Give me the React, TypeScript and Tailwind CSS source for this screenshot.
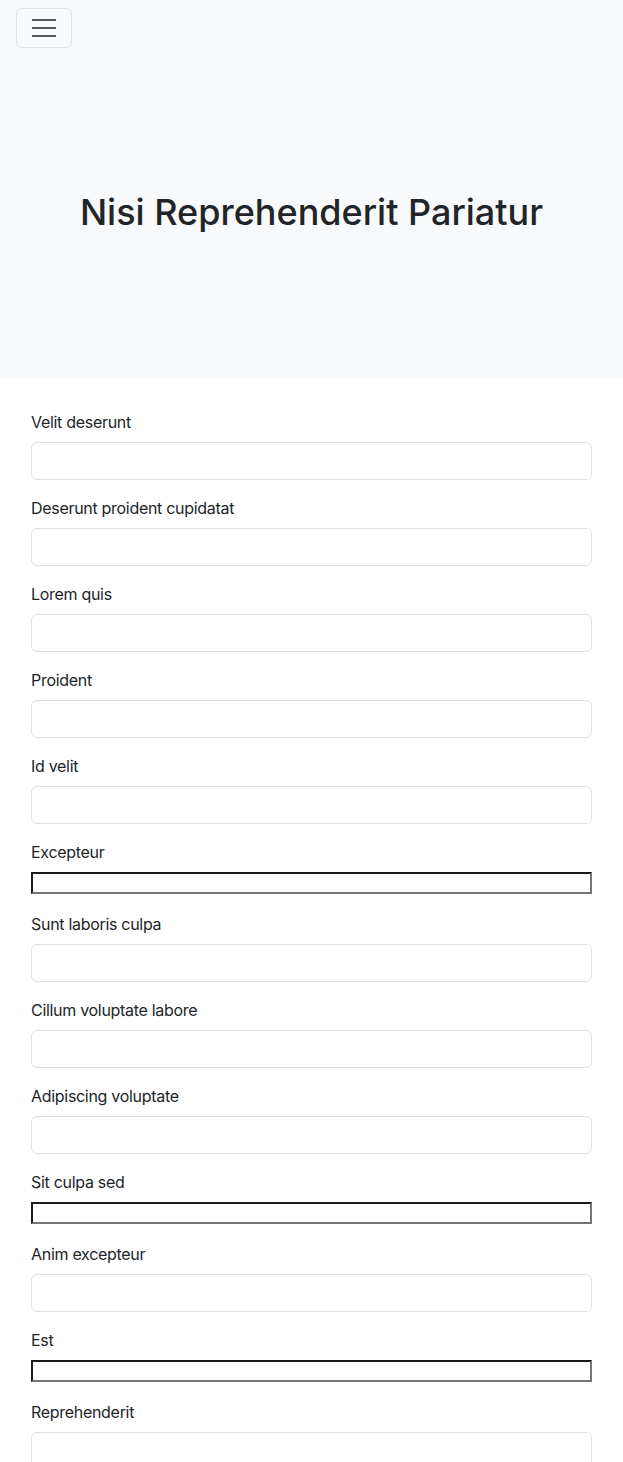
const fields: { label: string; plain?: boolean }[] = [
  { label: 'Velit deserunt' },
  { label: 'Deserunt proident cupidatat' },
  { label: 'Lorem quis' },
  { label: 'Proident' },
  { label: 'Id velit' },
  { label: 'Excepteur', plain: true },
  { label: 'Sunt laboris culpa' },
  { label: 'Cillum voluptate labore' },
  { label: 'Adipiscing voluptate' },
  { label: 'Sit culpa sed', plain: true },
  { label: 'Anim excepteur' },
  { label: 'Est', plain: true },
  { label: 'Reprehenderit' },
];

export default function App() {
  return (
    <div className="min-h-screen bg-white text-[#212529] font-['Inter',sans-serif]">
      {/* Header: navbar toggler + hero title */}
      <header className="bg-[#f8f9fa]">
        <nav className="px-4 py-2">
          <button
            type="button"
            className="w-14 h-10 flex items-center justify-center border border-[#dee2e6] rounded-md"
          >
            <svg width="24" height="24" viewBox="0 0 24 24">
              <path d="M0 4h24M0 12h24M0 20h24" stroke="rgba(33,37,41,0.75)" strokeWidth="2" />
            </svg>
          </button>
        </nav>
        <div className="pt-[135px] pb-[136px] text-center">
          <h1 className="text-[36px] leading-[43px] font-medium mb-2">Nisi Reprehenderit Pariatur</h1>
        </div>
      </header>

      {/* Form fields */}
      <form className="px-[31px] pt-8">
        {fields.map((f) => (
          <div key={f.label} className="mb-4">
            <label className="block text-base leading-6 tracking-[-0.3px] mb-2">{f.label}</label>
            {f.plain ? (
              <div className="h-6">
                <input
                  type="text"
                  className="block w-full h-[22px] border-2 border-[#767676] border-t-[#1a1a1a] border-l-[#1a1a1a] bg-white"
                />
              </div>
            ) : (
              <input
                type="text"
                className="block w-full h-[38px] border border-[#dee2e6] rounded-md bg-white"
              />
            )}
          </div>
        ))}
      </form>
    </div>
  );
}
